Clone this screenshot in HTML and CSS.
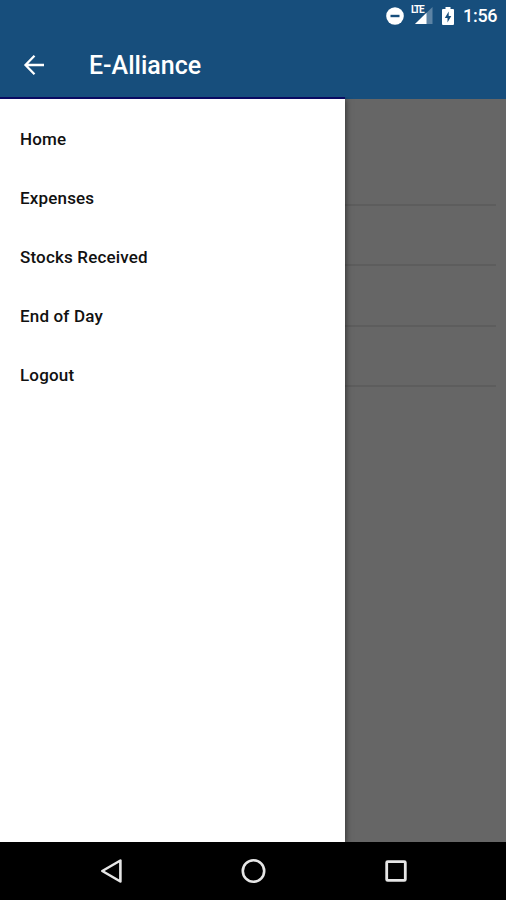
FILE: index.html
```html
<!DOCTYPE html>
<html lang="en">
<head>
<meta charset="utf-8">
<title>E-Alliance</title>
<link rel="stylesheet" href="styles.css">
</head>
<body>
<div class="screen">
  <div class="status-bar">
    <svg class="dnd" width="18" height="18" viewBox="0 0 18 18"><circle cx="9" cy="9" r="8.8" fill="#fff"/><path d="M4.500 9h9" stroke="#174e7c" stroke-width="2.400"/></svg>
    <div class="signal">
      <svg width="22" height="18" viewBox="0 0 22 18"><path d="M21.500 0v17H4z" fill="#5d83a4"/><path d="M15.500 5.800V17H4z" fill="#fff"/></svg>
      <span class="network">LTE</span>
    </div>
    <svg class="battery" width="12" height="18" viewBox="0 0 12 18"><path d="M3.500 0h5v2H11q1 0 1 1v14q0 1-1 1H1q-1 0-1-1V3q0-1 1-1h2.500z" fill="#fff"/><path d="M6.700 4.500L2.800 11h2.700v4.500L9.300 9H6.700z" fill="#174e7c"/></svg>
    <span class="clock">1:56</span>
  </div>
  <header class="app-bar">
    <svg class="back" width="22" height="20" viewBox="0 0 22 20" fill="none" stroke="#fff" stroke-width="2.300"><path d="M21 10H2.500M11.500 .8L2.500 10l9 9.200"/></svg>
    <h1 class="title">E-Alliance</h1>
  </header>
  <main class="content">
    <nav class="drawer">
      <a class="item">Home</a>
      <a class="item">Expenses</a>
      <a class="item">Stocks Received</a>
      <a class="item">End of Day</a>
      <a class="item">Logout</a>
    </nav>
    <div class="page">
      <div class="row first"></div>
      <div class="row"></div>
      <div class="row tall"></div>
      <div class="row"></div>
    </div>
  </main>
  <footer class="nav-bar">
    <svg width="142" height="58" viewBox="0 0 142 58" fill="none" stroke="#e6e6e6" stroke-width="2.600"><path d="M80.400 18.500v21L62.300 29z" stroke-linejoin="round"/></svg>
    <svg width="142" height="58" viewBox="0 0 142 58" fill="none" stroke="#e6e6e6" stroke-width="2.600"><circle cx="71.500" cy="29" r="10.700"/></svg>
    <svg width="142" height="58" viewBox="0 0 142 58" fill="none" stroke="#e6e6e6" stroke-width="2.800"><rect x="62.700" y="19.600" width="18.600" height="18.800" rx="1"/></svg>
  </footer>
</div>
</body>
</html>
```
FILE: styles.css
```css
* { box-sizing: border-box; }
body { margin: 0; font-family: Roboto, "Liberation Sans", sans-serif; }
.screen { width: 506px; height: 900px; display: flex; flex-direction: column; overflow: hidden; background: #174e7c; }
.status-bar { height: 32px; display: flex; align-items: center; justify-content: flex-end; padding-right: 9px; color: #fff; }
.dnd { margin-right: 7px; }
.signal { position: relative; width: 22px; height: 18px; margin-right: 9px; }
.signal svg { display: block; }
.network { position: absolute; left: 0; top: -2px; font-size: 10px; line-height: 10px; font-weight: 700; letter-spacing: -1.2px; background: #174e7c; }
.battery { margin-right: 9px; }
.clock { font-size: 18px; line-height: 32px; font-weight: 500; width: 34px; white-space: nowrap; letter-spacing: -0.3px; }
.app-bar { height: 67px; display: flex; align-items: center; padding-left: 23px; }
.back { margin-top: -2px; }
.title { margin: 0 0 0 44px; font-size: 25px; line-height: 30px; font-weight: 500; color: #fff; }
.content { height: 743px; display: flex; background: #666; }
.drawer { position: relative; width: 345px; flex: none; margin-top: -2px; padding-top: 11px; background: #fff; border-top: 2px solid #0a0a62; box-shadow: 1px 2px 6px rgba(0, 0, 0, 0.5); clip-path: inset(0 -12px 0 0); }
.item { display: block; height: 59px; padding-left: 20px; font-size: 17px; line-height: 59px; font-weight: 500; letter-spacing: 0.17px; color: #111; }
.page { flex: 1; padding-right: 10px; }
.row { height: 60px; border-bottom: 2px solid #5d5d5d; }
.row.first { height: 107px; }
.row.tall { height: 61px; }
.nav-bar { height: 58px; display: flex; justify-content: center; background: #000; }
```
